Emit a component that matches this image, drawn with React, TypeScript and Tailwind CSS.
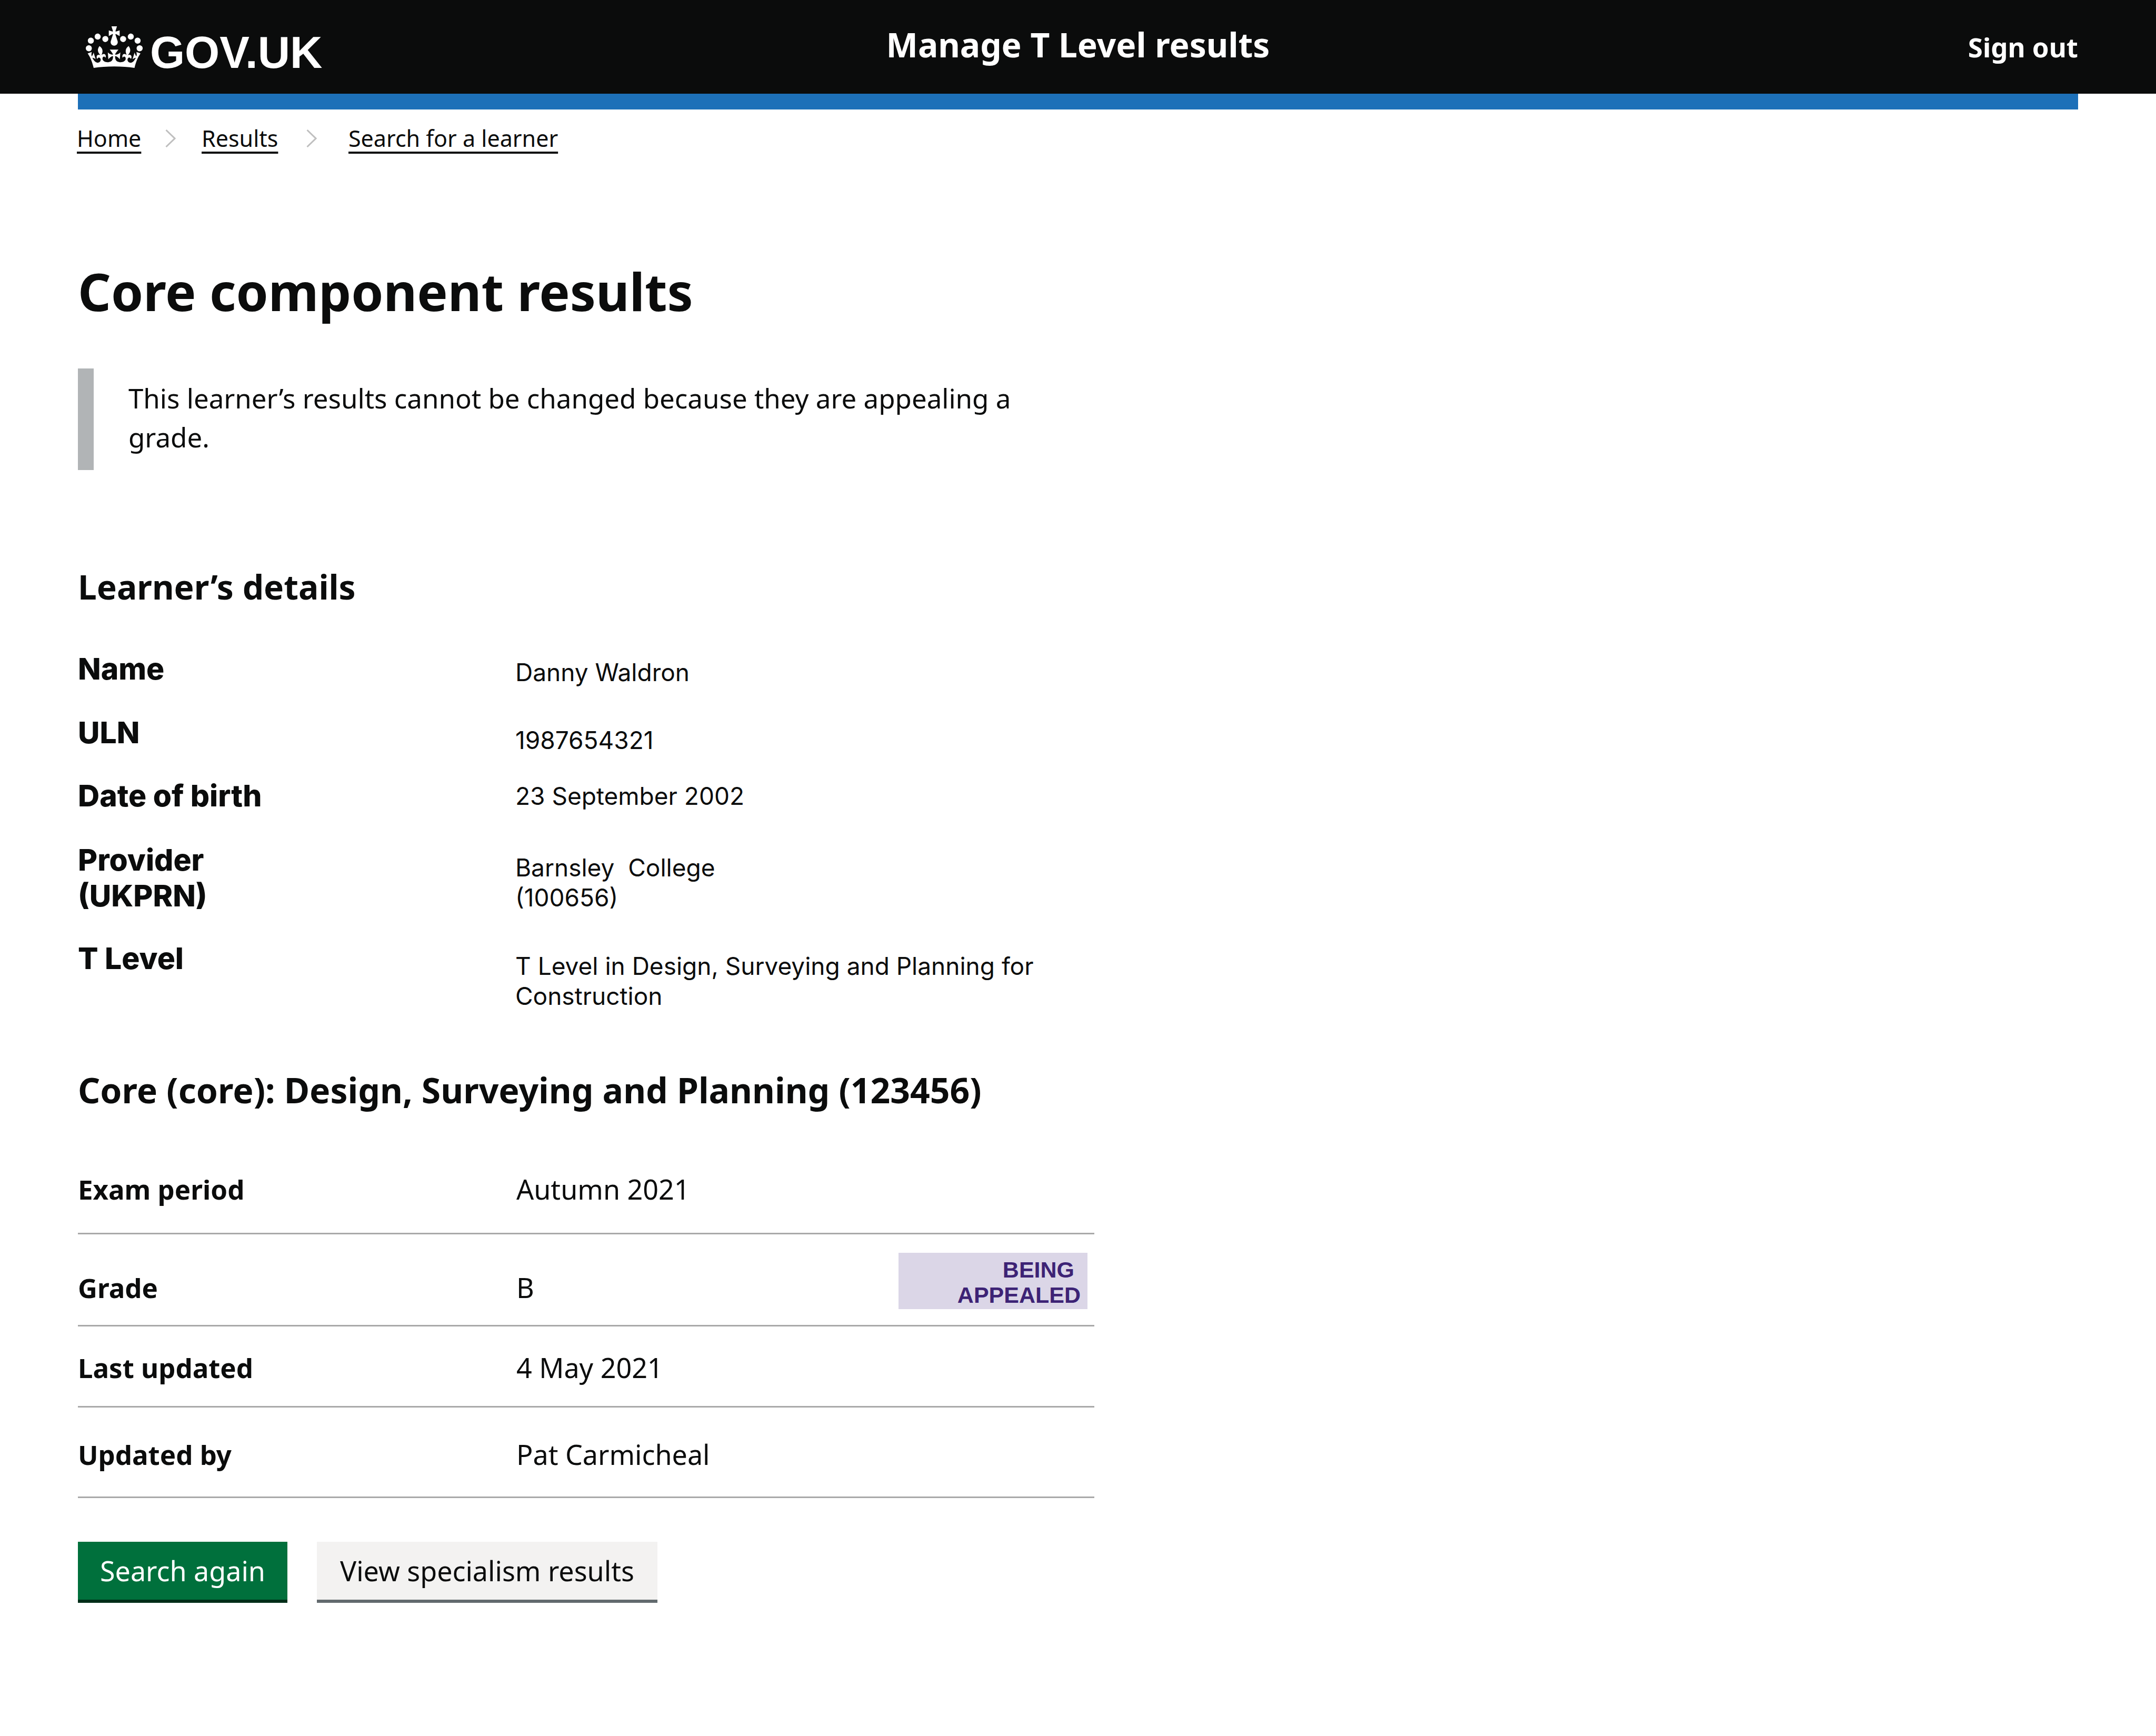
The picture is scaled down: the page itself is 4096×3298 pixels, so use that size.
import React from "react";

const learnerDetails = [
  { label: ["Name"], value: ["Danny Waldron"], row: "pb-[52px]", valuePad: "pt-3" },
  { label: ["ULN"], value: ["1987654321"], row: "pb-[43px]", valuePad: "pt-5" },
  { label: ["Date of birth"], value: ["23 September 2002"], row: "pb-[54px]", valuePad: "pt-1.5" },
  { label: ["Provider", "(UKPRN)"], value: ["Barnsley  College", "(100656)"], row: "pb-[51px]", valuePad: "pt-5" },
  {
    label: ["T Level"],
    value: ["T Level in Design, Surveying and Planning for", "Construction"],
    row: "",
    valuePad: "pt-5",
  },
];

const results = [
  { label: "Exam period", value: "Autumn 2021", pad: "pb-[46px]" },
  { label: "Grade", value: "B", pad: "pt-[64px] pb-[34px]", appealed: true },
  { label: "Last updated", value: "4 May 2021", pad: "pt-[41px] pb-[36px]" },
  { label: "Updated by", value: "Pat Carmicheal", pad: "pt-[52px] pb-[43px]" },
];

function Crown() {
  return (
    <svg viewBox="0 0 132 96" preserveAspectRatio="none" className="h-[79px] w-[108px]" fill="currentColor" aria-hidden="true">
      <path d="M25 30.2c3.5 1.5 7.7-.2 9.1-3.7 1.5-3.6-.2-7.8-3.9-9.2-3.6-1.4-7.6.3-9.1 3.9-1.4 3.5.3 7.5 3.9 9zM9 39.5c3.6 1.5 7.8-.2 9.2-3.7 1.5-3.6-.2-7.8-3.9-9.1-3.6-1.5-7.6.2-9.1 3.8-1.4 3.5.3 7.5 3.8 9zM4.4 57.2c3.5 1.5 7.7-.2 9.1-3.8 1.5-3.6-.2-7.7-3.9-9.1-3.5-1.5-7.6.3-9.1 3.8-1.4 3.5.3 7.6 3.9 9.1zm38.3-21.4c3.5 1.5 7.7-.2 9.1-3.8 1.5-3.6-.2-7.7-3.9-9.1-3.6-1.5-7.6.3-9.1 3.8-1.3 3.6.4 7.7 3.9 9.1zm64.4-5.6c-3.6 1.5-7.8-.2-9.1-3.7-1.5-3.6.2-7.8 3.8-9.2 3.6-1.4 7.7.3 9.2 3.9 1.3 3.5-.4 7.5-3.9 9zm15.9 9.3c-3.6 1.5-7.7-.2-9.1-3.7-1.5-3.6.2-7.8 3.7-9.1 3.6-1.5 7.7.2 9.2 3.8 1.5 3.5-.3 7.5-3.8 9zm4.7 17.7c-3.6 1.5-7.8-.2-9.2-3.8-1.5-3.6.2-7.7 3.9-9.1 3.6-1.5 7.7.3 9.2 3.8 1.3 3.5-.4 7.6-3.9 9.1zM89.3 35.8c-3.6 1.5-7.8-.2-9.2-3.8-1.4-3.6.2-7.7 3.9-9.1 3.6-1.5 7.7.3 9.2 3.8 1.4 3.6-.3 7.7-3.9 9.1zM69.7 17.7l8.9 4.7V9.3l-8.9 2.8c-.2-.3-.5-.6-.9-.9L72.4 0H59.6l3.5 11.2c-.3.3-.6.5-.9.9l-8.8-2.8v13.1l8.8-4.7c.3.3.6.7.9.9l-5 15.4v.1c-.2.8-.4 1.6-.4 2.4 0 4.1 3.1 7.5 7 8.1h.2c.3 0 .7.1 1 .1.4 0 .7 0 1-.1h.2c4-.6 7.1-4.1 7.1-8.1 0-.8-.1-1.7-.4-2.4V34l-5.1-15.4c.4-.2.7-.6 1-.9zM66 92.8c16.9 0 32.8 1.1 47.1 3.2 4-16.9 8.9-26.7 14-33.5l-9.6-3.4c1 4.9 1.1 7.2 0 10.2-1.5-1.4-3-4.3-4.2-8.7L108.6 76c2.8-2 5-3.2 7.5-3.3-4.4 9.4-10 11.9-13.6 11.2-4.3-.8-6.3-4.6-5.6-7.9 1-4.7 5.7-5.9 8-.5 4.3-8.7-3-11.4-7.6-8.8 7.1-7.2 7.9-13.5 2.1-21.1-8 6.1-8.1 12.3-4.5 20.8-4.7-5.4-12.1-2.5-9.5 6.2 3.4-5.2 7.9-2 7.2 3.1-.6 4.3-6.4 7.8-13.5 7.2-10.3-.9-10.9-8-11.2-13.8 2.5-.5 7.1 1.8 11 7.3L80.2 60c-4.1 4.4-8 5.3-12.3 5.4 1.4-4.4 8-11.6 8-11.6H55.5s6.4 7.2 7.9 11.6c-4.2-.1-8-1-12.3-5.4l1.4 16.4c3.9-5.5 8.5-7.7 10.9-7.3-.3 5.8-.9 12.8-11.1 13.8-7.2.6-12.9-2.9-13.5-7.2-.7-5 3.8-8.3 7.1-3.1 2.7-8.7-4.6-11.6-9.4-6.2 3.7-8.5 3.6-14.7-4.6-20.8-5.8 7.6-5 13.9 2.2 21.1-4.7-2.6-11.9.1-7.7 8.8 2.3-5.5 7.1-4.2 8.1.5.7 3.3-1.3 7.1-5.7 7.9-3.5.7-9-1.8-13.5-11.2 2.5.1 4.7 1.3 7.5 3.3l-4.7-15.4c-1.2 4.4-2.7 7.2-4.3 8.7-1.1-3-.9-5.3 0-10.2l-9.5 3.4c5 6.9 9.9 16.7 14 33.5 14.8-2.1 30.8-3.2 47.7-3.2z" />
    </svg>
  );
}

function Chevron() {
  return (
    <svg viewBox="0 0 20 34" className="h-[34px] w-5" fill="none" stroke="#bfbfbf" strokeWidth="3" aria-hidden="true">
      <path d="M1.5 1L18 17L1.5 33" />
    </svg>
  );
}

function Lines({ items }: { items: string[] }) {
  return (
    <>
      {items.map((line) => (
        <span key={line} className="block whitespace-pre">
          {line}
        </span>
      ))}
    </>
  );
}

const crumbLink = "underline decoration-4 underline-offset-[9px]";

export default function App() {
  return (
    <div className="bg-white font-['Noto_Sans',sans-serif] text-[51px] leading-[74px] text-[#0b0c0c]">
      <header className="bg-[#0b0c0c] text-white">
        <div className="grid min-h-[178px] grid-cols-[1fr_auto_1fr] items-center px-[148px]">
          <a
            href="#"
            className="flex items-baseline gap-[14px] justify-self-start pt-[14px] pl-[15px] font-['Liberation_Sans',sans-serif] text-[85px] leading-none font-bold"
          >
            <Crown />
            <span>GOV.UK</span>
          </a>
          <a href="#" className="pb-2 text-[64px] leading-[86px] font-bold">
            Manage T Level results
          </a>
          <a href="#" className="justify-self-end font-bold">
            Sign out
          </a>
        </div>
      </header>
      <div className="mx-[148px] h-[30px] bg-[#1d70b8]" />

      <nav aria-label="Breadcrumb" className="mt-[25px] px-[146px] text-[43px] leading-[60px]">
        <ol className="flex">
          <li className="flex w-[237px] items-center justify-between pr-[49px]">
            <a href="#" className={crumbLink}>
              Home
            </a>
            <Chevron />
          </li>
          <li className="flex w-[279px] items-center justify-between pr-[60px]">
            <a href="#" className={crumbLink}>
              Results
            </a>
            <Chevron />
          </li>
          <li>
            <a href="#" className={crumbLink}>
              Search for a learner
            </a>
          </li>
        </ol>
      </nav>

      <main className="px-[148px] pb-[250px]">
        <h1 className="mt-[193px] text-[98px] leading-[134px] font-bold">Core component results</h1>

        <div className="mt-20 max-w-[1930px] border-l-[30px] border-[#b1b4b6] pt-[19px] pr-[120px] pb-[26px] pl-[66px]">
          <p>This learner’s results cannot be changed because they are appealing a grade.</p>
        </div>

        <h2 className="mt-[178px] text-[64px] leading-[88px] font-bold">Learner’s details</h2>
        <dl className="mt-[78px] font-['Inter',sans-serif]">
          {learnerDetails.map((d) => (
            <div key={d.label[0]} className={`grid grid-cols-[831px_1fr] ${d.row}`}>
              <dt className="text-[57px] leading-[68px] font-extrabold">
                <Lines items={d.label} />
              </dt>
              <dd className={`text-[46px] leading-[57px] ${d.valuePad}`}>
                <Lines items={d.value} />
              </dd>
            </div>
          ))}
        </dl>

        <h2 className="mt-[105px] text-[66px] leading-[88px] font-bold">
          Core (core): Design, Surveying and Planning (123456)
        </h2>
        <dl className="mt-[108px] max-w-[1931px]">
          {results.map((r) => (
            <div key={r.label} className="flex items-start border-b-[3px] border-[#a9a9a9]">
              <dt className={`w-[833px] font-bold ${r.pad}`}>{r.label}</dt>
              <dd className={`grow text-[52px] ${r.pad}`}>{r.value}</dd>
              {r.appealed && (
                <dd className="mt-[35px] mr-[13px] w-[359px] bg-[#dbd6e7] pt-2 pr-[13px] pb-[3px] text-right font-['Liberation_Sans',sans-serif] text-[43px] leading-[48px] font-bold text-[#3d2375]">
                  <Lines items={["BEING ", "APPEALED"]} />
                </dd>
              )}
            </div>
          ))}
        </dl>

        <div className="mt-[83px] flex gap-14 text-[52px]">
          <button type="button" className="border-b-[6px] border-[#002d18] bg-[#00703c] px-[42px] py-[18px] text-white">
            Search again
          </button>
          <button type="button" className="border-b-[6px] border-[#626a6e] bg-[#f3f2f1] px-[44px] py-[18px]">
            View specialism results
          </button>
        </div>
      </main>
    </div>
  );
}
